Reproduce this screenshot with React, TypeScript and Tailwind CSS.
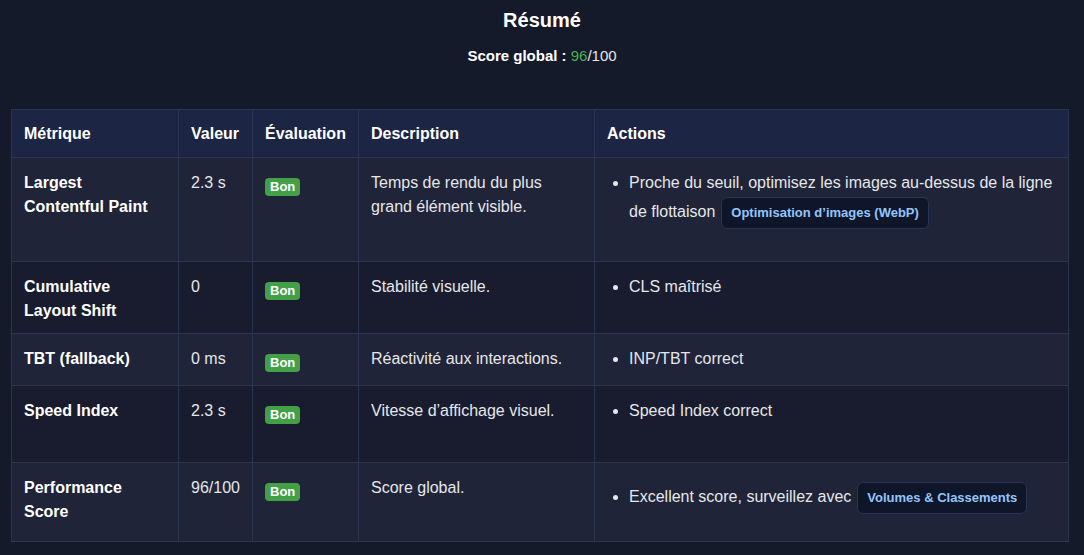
const rows = [
  { m: "Largest Contentful Paint", v: "2.3 s", d: "Temps de rendu du plus grand élément visible.", a: "Proche du seuil, optimisez les images au-dessus de la ligne de flottaison", link: "Optimisation d’images (WebP)", h: "h-[104px]" },
  { m: "Cumulative Layout Shift", v: "0", d: "Stabilité visuelle.", a: "CLS maîtrisé", h: "h-[72px]" },
  { m: "TBT (fallback)", v: "0 ms", d: "Réactivité aux interactions.", a: "INP/TBT correct", h: "h-[52px]" },
  { m: "Speed Index", v: "2.3 s", d: "Vitesse d’affichage visuel.", a: "Speed Index correct", h: "h-[77px]" },
  { m: "Performance Score", v: "96/100", d: "Score global.", a: "Excellent score, surveillez avec", link: "Volumes & Classements", h: "h-[79px]" },
];

export default function App() {
  return (
    <div className="min-h-[555px] bg-[#151a2b] text-[#e5e7eb] font-[Liberation_Sans,Arial,sans-serif] px-[11px] pt-[6px]">
      <h2 className="text-center text-[20px] font-bold text-white leading-[28px]">Résumé</h2>
      <p className="text-center text-[15px] mt-[12px] leading-[20px]">
        <b className="text-white">Score global :</b> <span className="text-[#4caf50]">96</span>/100
      </p>
      <table className="mt-[43px] w-[1058px] table-fixed border-collapse text-[16px] leading-[24px]">
        <thead>
          <tr className="bg-[#1c2543] h-[48px] text-left text-white">
            <th className="border border-[#2c3550] px-3 w-[167px]">Métrique</th>
            <th className="border border-[#2c3550] px-3 w-[74px]">Valeur</th>
            <th className="border border-[#2c3550] px-3 w-[106px]">Évaluation</th>
            <th className="border border-[#2c3550] px-3 w-[236px]">Description</th>
            <th className="border border-[#2c3550] px-3">Actions</th>
          </tr>
        </thead>
        <tbody>
          {rows.map((r, i) => (
            <tr key={r.m} className={`${i % 2 === 0 ? "bg-[#1f2438]" : "bg-[#181c2e]"} ${r.h} align-top`}>
              <td className="border border-[#2c3550] px-3 pt-[13px] font-bold text-white">{r.m}</td>
              <td className="border border-[#2c3550] px-3 pt-[13px]">{r.v}</td>
              <td className="border border-[#2c3550] px-3 pt-[16px]">
                <span className="inline-block rounded bg-[#43a047] px-[5px] text-[13px] leading-[18px] font-bold text-white">Bon</span>
              </td>
              <td className="border border-[#2c3550] px-3 pt-[13px]">{r.d}</td>
              <td className="border border-[#2c3550] px-3 pt-[13px]">
                <ul className="list-disc pl-[22px] leading-[28px] -mt-[2px]">
                  <li className={r.link && i === 4 ? "mt-[8px]" : ""}>
                    {r.a}
                    {r.link && (
                      <span className="ml-[6px] inline-block rounded-md border border-[#2a3350] bg-[#0f1629] px-[9px] text-[13px] leading-[30px] font-bold text-[#93c5fd]">{r.link}</span>
                    )}
                  </li>
                </ul>
              </td>
            </tr>
          ))}
        </tbody>
      </table>
    </div>
  );
}
